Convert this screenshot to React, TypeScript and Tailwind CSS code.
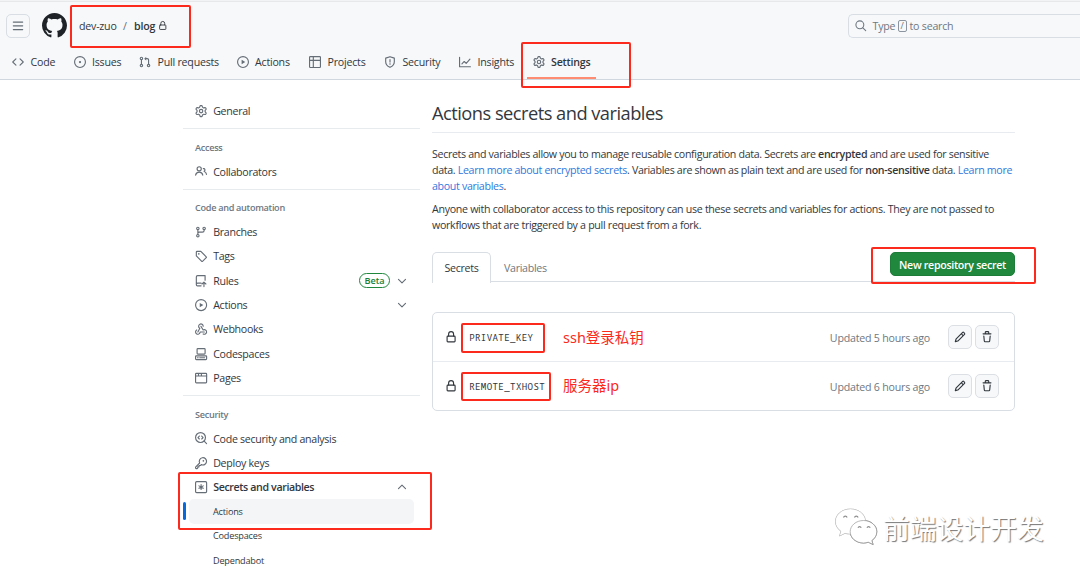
import type { ReactNode } from 'react';

const fills: Record<string, string> = {
  bars: 'M1 2.75A.75.75 0 0 1 1.75 2h12.5a.75.75 0 0 1 0 1.5H1.75A.75.75 0 0 1 1 2.75Zm0 5A.75.75 0 0 1 1.75 7h12.5a.75.75 0 0 1 0 1.5H1.75A.75.75 0 0 1 1 7.75ZM1.75 12h12.5a.75.75 0 0 1 0 1.5H1.75a.75.75 0 0 1 0-1.5Z',
  github:
    'M8 0c4.42 0 8 3.58 8 8a8.013 8.013 0 0 1-5.45 7.59c-.4.08-.55-.17-.55-.38 0-.27.01-1.13.01-2.2 0-.75-.25-1.23-.54-1.48 1.78-.2 3.65-.88 3.65-3.95 0-.88-.31-1.59-.82-2.15.08-.2.36-1.02-.08-2.12 0 0-.67-.22-2.2.82-.64-.18-1.32-.27-2-.27-.68 0-1.36.09-2 .27-1.53-1.03-2.2-.82-2.2-.82-.44 1.1-.16 1.92-.08 2.12-.51.56-.82 1.28-.82 2.15 0 3.06 1.86 3.75 3.64 3.95-.23.2-.44.55-.51 1.07-.46.21-1.61.55-2.33-.66-.15-.24-.6-.83-1.23-.82-.67.01-.27.38.01.53.34.19.73.9.82 1.13.16.45.68 1.31 2.69.94 0 .67.01 1.3.01 1.49 0 .21-.15.45-.55.38A7.995 7.995 0 0 1 0 8c0-4.42 3.58-8 8-8Z',
  code: 'm11.28 3.22 4.25 4.25a.75.75 0 0 1 0 1.06l-4.25 4.25a.749.749 0 0 1-1.275-.326.749.749 0 0 1 .215-.734L13.94 8l-3.72-3.72a.749.749 0 0 1 .326-1.275.749.749 0 0 1 .734.215Zm-6.56 0a.751.751 0 0 1 1.042.018.751.751 0 0 1 .018 1.042L2.06 8l3.72 3.72a.749.749 0 0 1-.326 1.275.749.749 0 0 1-.734-.215L.47 8.53a.75.75 0 0 1 0-1.06Z',
  gear: 'M8 0a8.2 8.2 0 0 1 .701.031C9.444.095 9.99.645 10.16 1.29l.288 1.107c.018.066.079.158.212.224.231.114.454.243.668.386.123.082.233.09.299.071l1.103-.303c.644-.176 1.392.021 1.82.63.27.385.506.792.704 1.218.315.675.111 1.422-.364 1.891l-.814.806c-.049.048-.098.147-.088.294.016.257.016.515 0 .772-.01.147.038.246.088.294l.814.806c.475.469.679 1.216.364 1.891a7.977 7.977 0 0 1-.704 1.217c-.428.61-1.176.807-1.82.63l-1.102-.302c-.067-.019-.177-.011-.3.071a5.909 5.909 0 0 1-.668.386c-.133.066-.194.158-.211.224l-.29 1.106c-.168.646-.715 1.196-1.458 1.26a8.006 8.006 0 0 1-1.402 0c-.743-.064-1.289-.614-1.458-1.26l-.289-1.106c-.018-.066-.079-.158-.212-.224a5.738 5.738 0 0 1-.668-.386c-.123-.082-.233-.09-.299-.071l-1.103.303c-.644.176-1.392-.021-1.82-.63a8.12 8.12 0 0 1-.704-1.218c-.315-.675-.111-1.422.363-1.891l.815-.806c.05-.048.098-.147.088-.294a6.214 6.214 0 0 1 0-.772c.01-.147-.038-.246-.088-.294l-.815-.806C.635 6.045.431 5.298.746 4.623a7.92 7.92 0 0 1 .704-1.217c.428-.61 1.176-.807 1.82-.63l1.102.302c.067.019.177.011.3-.071.214-.143.437-.272.668-.386.133-.066.194-.158.211-.224l.29-1.106C6.009.645 6.556.095 7.299.03 7.53.01 7.764 0 8 0Zm-.571 1.525c-.036.003-.108.036-.137.146l-.289 1.105c-.147.561-.549.967-.998 1.189-.173.086-.34.183-.5.29-.417.278-.97.423-1.529.27l-1.103-.303c-.109-.03-.175.016-.195.045-.22.312-.412.644-.573.99-.014.031-.021.11.059.19l.815.806c.411.406.562.957.53 1.456a4.709 4.709 0 0 0 0 .582c.032.499-.119 1.05-.53 1.456l-.815.806c-.081.08-.073.159-.059.19.162.346.353.677.573.989.02.03.085.076.195.046l1.102-.303c.56-.153 1.113-.008 1.53.27.161.107.328.204.501.29.447.222.85.629.997 1.189l.289 1.105c.029.109.101.143.137.146a6.6 6.6 0 0 0 1.142 0c.036-.003.108-.036.137-.146l.289-1.105c.147-.561.549-.967.998-1.189.173-.086.34-.183.5-.29.417-.278.97-.423 1.529-.27l1.103.303c.109.029.175-.016.195-.045.22-.313.411-.644.573-.99.014-.031.021-.11-.059-.19l-.815-.806c-.411-.406-.562-.957-.53-1.456a4.709 4.709 0 0 0 0-.582c-.032-.499.119-1.05.53-1.456l.815-.806c.081-.08.073-.159.059-.19a6.464 6.464 0 0 0-.573-.989c-.02-.03-.085-.076-.195-.046l-1.102.303c-.56.153-1.113.008-1.53-.27a4.44 4.44 0 0 0-.501-.29c-.447-.222-.85-.629-.997-1.189l-.289-1.105c-.029-.11-.101-.143-.137-.146a6.6 6.6 0 0 0-1.142 0ZM11 8a3 3 0 1 1-6 0 3 3 0 0 1 6 0ZM9.5 8a1.5 1.5 0 1 0-3.001.001A1.5 1.5 0 0 0 9.5 8Z',
  webhook:
    'M5.5 4.25a2.25 2.25 0 0 1 4.5 0 .75.75 0 0 0 1.5 0 3.75 3.75 0 1 0-6.14 2.889l-2.272 4.258a.75.75 0 0 0 1.324.706L7 7.25a.75.75 0 0 0-.309-1.015A2.25 2.25 0 0 1 5.5 4.25Z M7.364 3.607a.75.75 0 0 1 1.03.257l2.608 4.349a3.75 3.75 0 1 1-.628 6.785.75.75 0 0 1 .752-1.299 2.25 2.25 0 1 0-.033-3.88.75.75 0 0 1-1.03-.256L7.107 4.636a.75.75 0 0 1 .257-1.03Z M2.9 8.776A.75.75 0 0 1 2.625 9.8 2.25 2.25 0 1 0 6 11.75a.75.75 0 0 1 .75-.751h5.5a.75.75 0 0 1 0 1.5H7.425a3.751 3.751 0 1 1-5.55-3.998.75.75 0 0 1 1.024.274Z',
  pencil:
    'M11.013 1.427a1.75 1.75 0 0 1 2.474 0l1.086 1.086a1.75 1.75 0 0 1 0 2.474l-8.61 8.61c-.21.21-.47.364-.756.445l-3.251.93a.75.75 0 0 1-.927-.928l.929-3.25c.081-.286.235-.547.445-.758l8.61-8.61Zm.176 4.823L9.75 4.81l-6.286 6.287a.253.253 0 0 0-.064.108l-.558 1.953 1.953-.558a.253.253 0 0 0 .108-.064Zm1.238-3.763a.25.25 0 0 0-.354 0L10.811 3.75l1.439 1.44 1.263-1.263a.25.25 0 0 0 0-.354Z',
  trash:
    'M11 1.75V3h2.25a.75.75 0 0 1 0 1.5H2.75a.75.75 0 0 1 0-1.5H5V1.75C5 .784 5.784 0 6.75 0h2.5C10.216 0 11 .784 11 1.75ZM4.496 6.675l.66 6.6a.25.25 0 0 0 .249.225h5.19a.25.25 0 0 0 .249-.225l.66-6.6a.75.75 0 0 1 1.492.149l-.66 6.6A1.748 1.748 0 0 1 10.595 15h-5.19a1.75 1.75 0 0 1-1.741-1.575l-.66-6.6a.75.75 0 1 1 1.492-.15ZM6.5 1.75V3h3V1.75a.25.25 0 0 0-.25-.25h-2.5a.25.25 0 0 0-.25.25Z',
};

const dot = { fill: 'currentColor', stroke: 'none' };

const strokes: Record<string, ReactNode> = {
  issue: (
    <>
      <circle cx="8" cy="8" r="7.25" />
      <circle cx="8" cy="8" r="1.5" {...dot} />
    </>
  ),
  pull: (
    <>
      <circle cx="3.25" cy="3.25" r="1.6" />
      <circle cx="3.25" cy="12.75" r="1.6" />
      <circle cx="12.75" cy="12.75" r="1.6" />
      <path d="M3.25 5v6M12.75 11V5.25a1.75 1.75 0 0 0-1.75-1.75H8.5" />
      <path d="M9.6.9v5.2L7 3.5Z" {...dot} />
    </>
  ),
  play: (
    <>
      <circle cx="8" cy="8" r="7.25" />
      <path d="M6.2 5.1v5.8L11 8Z" {...dot} />
    </>
  ),
  table: (
    <>
      <rect x=".75" y=".75" width="14.5" height="14.5" rx="1" />
      <path d="M5.75.75v14.5M.75 5.75h14.5" />
    </>
  ),
  shield: (
    <>
      <path d="M8 .9 2.25 2.8v4.7c0 3.3 2.1 5.9 5.75 7.6 3.65-1.7 5.75-4.3 5.75-7.6V2.8Z" />
      <path d="M8 4.9v3.2" />
      <circle cx="8" cy="10.6" r="1" {...dot} />
    </>
  ),
  graph: <path d="M.75 1.75v12.5h14.5M3.9 10.6 7 7.3l2.6 2.5 5-5.6" />,
  people: (
    <>
      <circle cx="5.5" cy="5" r="2.75" />
      <path d="M.8 13.4a4.75 4.75 0 0 1 9.4 0M10.9 4.75a1.7 1.7 0 0 1 .9 3.4M12.1 8.5c1.7.5 2.7 1.9 3 3.9" />
    </>
  ),
  branch: (
    <>
      <circle cx="3.75" cy="3.25" r="1.6" />
      <circle cx="3.75" cy="12.75" r="1.6" />
      <circle cx="12" cy="3.25" r="1.6" />
      <path d="M3.75 5v6M12 5v.75C12 7 11 8 9.75 8H5.5C4.5 8 3.75 8.7 3.75 9.7" />
    </>
  ),
  tag: (
    <>
      <path d="M1.75 2.75v5l7.1 7.1c.3.3.7.3 1 0l4.9-4.9c.3-.3.3-.7 0-1l-7.1-7.2h-4.9c-.55 0-1 .45-1 1Z" />
      <circle cx="5" cy="5" r="1.1" {...dot} />
    </>
  ),
  rules: (
    <path d="M8 14.25H3.25c-1 0-1.5-.7-1.5-1.5V2.5c0-1 .7-1.75 1.75-1.75h9.75v6M1.75 12.5c0-1.2.6-1.75 1.75-1.75H8M11.75 15.2V9.6M9.2 11.8l2.55-2.5 2.55 2.5" />
  ),
  codespaces: (
    <>
      <rect x="2.75" y=".75" width="10.5" height="7.2" rx="1" />
      <rect x=".75" y="10.25" width="14.5" height="5" rx="1" />
      <path d="M3.2 12.75h1M6.2 12.75h6.5" />
    </>
  ),
  browser: (
    <>
      <rect x=".75" y="1.75" width="14.5" height="12.5" rx="1" />
      <path d="M.75 5.25h14.5M4.6 2v3M8.4 2v3" />
    </>
  ),
  codescan: (
    <>
      <circle cx="7.25" cy="7.25" r="6.5" />
      <path d="m12 12 3.2 3.2M5.7 5.3 3.9 7.25l1.8 1.95M8.8 5.3l1.8 1.95-1.8 1.95" />
    </>
  ),
  key: (
    <>
      <path d="M6.1 7.9a4.8 4.8 0 1 1 2.1 2.1l-1.1 1.2H5.3v1.7H3.6v1.6l-.8.75H1.5c-.5 0-.75-.3-.75-.75v-1.2Z" />
      <circle cx="11" cy="5" r="1.1" {...dot} />
    </>
  ),
  asterisk: (
    <>
      <rect x=".75" y=".75" width="14.5" height="14.5" rx="1.4" />
      <path d="M8 4.8v6.4M5.2 6.4l5.6 3.2M10.8 6.4l-5.6 3.2" />
    </>
  ),
  lock: (
    <>
      <rect x="2.75" y="6.75" width="10.5" height="7.5" rx="1" />
      <path d="M4.75 6.5V4a3.25 3.25 0 0 1 6.5 0v2.5" />
    </>
  ),
  search: (
    <>
      <circle cx="6.75" cy="6.75" r="5.5" />
      <path d="m10.9 10.9 4 4" />
    </>
  ),
  down: <path d="m3.3 5.8 4.7 4.6 4.7-4.6" />,
  up: <path d="m3.3 10.2 4.7-4.6 4.7 4.6" />,
};

function Icon({ name, className = 'size-3' }: { name: string; className?: string }) {
  return (
    <svg viewBox="0 0 16 16" className={`shrink-0 overflow-visible ${className}`} aria-hidden="true">
      {fills[name] ? (
        <path d={fills[name]} fill="currentColor" />
      ) : (
        <g fill="none" stroke="currentColor" strokeWidth="1.5" strokeLinecap="round" strokeLinejoin="round">
          {strokes[name]}
        </g>
      )}
    </svg>
  );
}

const tabs = [
  { icon: 'code', label: 'Code', width: 'w-[61.5px]' },
  { icon: 'issue', label: 'Issues', width: 'w-[65.5px]' },
  { icon: 'pull', label: 'Pull requests', width: 'w-[97.5px]' },
  { icon: 'play', label: 'Actions', width: 'w-[72.5px]' },
  { icon: 'table', label: 'Projects', width: 'w-[75px]' },
  { icon: 'shield', label: 'Security', width: 'w-[75px]' },
  { icon: 'graph', label: 'Insights', width: 'w-[74px]' },
];

function Header() {
  return (
    <header className="flex h-20 flex-col border-b border-[#d0d7de] bg-[#f6f8fa] tracking-[-0.22px]">
      <div className="h-[2px] shrink-0 border-b border-[#e6e8ea] bg-[#f1f3f4]" />
      <div className="flex h-12 items-center pl-1.5">
        <button className="flex size-6 items-center justify-center rounded-[5px] border border-[#d8dee4] text-[#656d76]">
          <Icon name="bars" />
        </button>
        <Icon name="github" className="ml-3 size-[25px] text-[#1f2328]" />
        <div className="ml-3 flex items-center">
          <span className="w-11 pt-[2px]">dev-zuo</span>
          <span className="w-[11px] pt-[2px] text-[#656d76]">/</span>
          <span className="w-[25px] pt-[2px] font-semibold">blog</span>
          <Icon name="lock" className="-ml-px size-[9.5px]" />
        </div>
        <div className="ml-auto flex h-6 w-[232px] items-center rounded-l-[5px] border border-r-0 border-[#d8dee4] pl-1.5 text-[#6e7781]">
          <Icon name="search" className="size-[11.5px]" />
          <span className="ml-1.5 w-[23px] pt-[2px]">Type</span>
          <span className="mr-[3px] ml-[2px] flex h-3 w-[9px] items-center justify-center rounded-[2px] border border-[#8c959f] text-[9px]">/</span>
          <span className="pt-[2px]">to search</span>
        </div>
      </div>
      <nav className="flex flex-1 pl-3">
        {tabs.map((t) => (
          <a key={t.label} className={`flex h-[25px] items-center gap-[6.5px] whitespace-nowrap ${t.width}`}>
            <Icon name={t.icon} className="size-3 text-[#656d76]" />
            <span className="pt-[1.5px]">{t.label}</span>
          </a>
        ))}
        <a className="-ml-[6px] flex h-[29.5px] w-[69px] flex-col border-b-2 border-[#fd8c73] pl-1.5 font-semibold">
          <span className="flex h-[25px] items-center gap-1.5">
            <Icon name="gear" className="size-3 text-[#656d76]" />
            <span className="pt-[1.5px]">Settings</span>
          </span>
        </a>
      </nav>
    </header>
  );
}

function NavRow({ icon, label, bold, children }: { icon: string; label: string; bold?: boolean; children?: ReactNode }) {
  return (
    <a className="flex h-[24.3px] items-center pr-3 pl-3">
      <Icon name={icon} className="size-[12.2px] text-[#656d76]" />
      <span className={bold ? 'ml-1.5 pt-[2px] font-semibold tracking-[-0.38px]' : 'ml-1.5 pt-[2px]'}>{label}</span>
      <span className="ml-auto flex items-center gap-1.5 text-[#656d76]">{children}</span>
    </a>
  );
}

function Section({ title, children }: { title: string; children: ReactNode }) {
  return (
    <section className="border-t border-[#e8ebee] pt-1.5 pb-[5px]">
      <h3 className="flex h-[24.3px] items-center pt-px pl-3 text-[9.15px] font-semibold text-[#6e7781]">{title}</h3>
      {children}
    </section>
  );
}

function Sidebar() {
  return (
    <aside className="w-[237px] shrink-0 pt-[18.8px]">
      <div className="pb-[5px]">
        <NavRow icon="gear" label="General" />
      </div>
      <Section title="Access">
        <NavRow icon="people" label="Collaborators" />
      </Section>
      <Section title="Code and automation">
        <NavRow icon="branch" label="Branches" />
        <NavRow icon="tag" label="Tags" />
        <NavRow icon="rules" label="Rules">
          <span className="flex h-[15px] w-[31px] items-center justify-center rounded-full border border-[#1f883d] pt-px text-[9.15px] font-semibold tracking-normal text-[#1a7f37]">
            Beta
          </span>
          <Icon name="down" />
        </NavRow>
        <NavRow icon="play" label="Actions">
          <Icon name="down" />
        </NavRow>
        <NavRow icon="webhook" label="Webhooks" />
        <NavRow icon="codespaces" label="Codespaces" />
        <NavRow icon="browser" label="Pages" />
      </Section>
      <Section title="Security">
        <NavRow icon="codescan" label="Code security and analysis" />
        <NavRow icon="key" label="Deploy keys" />
        <NavRow icon="asterisk" label="Secrets and variables" bold>
          <Icon name="up" />
        </NavRow>
        <div className="text-[9.15px] tracking-[-0.2px]">
          <div className="flex h-[24.3px] items-center">
            <span className="h-[18px] w-[3px] rounded-full bg-[#0969da]" />
            <span className="ml-[3px] flex h-full w-[225px] items-center rounded-[5px] bg-[#f4f5f7] pl-6">Actions</span>
          </div>
          <div className="flex h-[24.3px] items-center pt-px pl-[30px]">Codespaces</div>
          <div className="flex h-[24.3px] items-center pt-px pl-[30px]">Dependabot</div>
        </div>
      </Section>
    </aside>
  );
}

function SecretRow({ name, updated, last }: { name: string; updated: string; last?: boolean }) {
  return (
    <div className={last ? 'flex h-12 items-center pr-[15px] pl-3' : 'flex h-[49px] items-center border-b border-[#e8ebef] pr-[15px] pl-3'}>
      <Icon name="lock" className="size-[12.2px]" />
      <code className="ml-3 pt-px font-['Noto_Sans_Mono','DejaVu_Sans_Mono',monospace] text-[9.1px] tracking-[0.38px]">{name}</code>
      <span className="ml-auto pt-[3px] tracking-[-0.22px] text-[#6e7781]">{updated}</span>
      <span className="ml-[18px] flex gap-[3px]">
        <button className="flex size-6 items-center justify-center rounded-[5px] border border-[#dcdfe3] bg-[#f6f8fa]">
          <Icon name="pencil" />
        </button>
        <button className="flex size-6 items-center justify-center rounded-[5px] border border-[#dcdfe3] bg-[#f6f8fa]">
          <Icon name="trash" />
        </button>
      </span>
    </div>
  );
}

function Content() {
  return (
    <main className="ml-3 w-[583px] shrink-0 pt-[18px]">
      <h1 className="h-[35px] border-b border-[#e8ebef] text-[18.3px] leading-[29px] tracking-[-0.53px] whitespace-nowrap">
        Actions secrets and variables
      </h1>
      <p className="mt-[13px] leading-4 tracking-[-0.33px] whitespace-nowrap">
        Secrets and variables allow you to manage reusable configuration data. Secrets are{' '}
        <strong className="font-semibold">encrypted</strong> and are used for sensitive
        <br />
        data. <a className="text-[#2f78dd]">Learn more about encrypted secrets</a>. Variables are shown as plain text and are used for{' '}
        <strong className="font-semibold">non-sensitive</strong> data. <a className="text-[#2f78dd]">Learn more</a>
        <br />
        <a className="text-[#2f78dd]">about variables</a>.
      </p>
      <p className="mt-[7px] leading-4 whitespace-nowrap">
        Anyone with collaborator access to this repository can use these secrets and variables for actions. They are not passed to
        <br />
        workflows that are triggered by a pull request from a fork.
      </p>
      <div className="mt-[19px] flex h-[30px] border-b border-[#d8dee4]">
        <span className="flex h-[31px] w-[59px] items-center justify-center rounded-t-[5px] border border-b-0 border-[#d8dee4] bg-white pt-px">
          Secrets
        </span>
        <span className="flex h-[31px] items-center pt-[2px] pl-[13px] text-[#6e7781]">Variables</span>
        <button className="ml-auto flex h-6 w-[125px] items-center justify-center rounded-[5px] border border-[#1c7c38] bg-[#1f883d] pt-[3px] font-semibold whitespace-nowrap text-white">
          New repository secret
        </button>
      </div>
      <div className="mt-[30px] rounded-[5px] border border-[#d8dee4]">
        <SecretRow name="PRIVATE_KEY" updated="Updated 5 hours ago" />
        <SecretRow name="REMOTE_TXHOST" updated="Updated 6 hours ago" last />
      </div>
    </main>
  );
}

const marks = [
  'left-[70px] top-[5px] h-[43px] w-[121px]',
  'left-[521px] top-[42px] h-[46px] w-[110px]',
  'left-[871px] top-[247px] h-[37px] w-[165px]',
  'left-[461px] top-[323px] h-[30px] w-[84px]',
  'left-[461px] top-[372px] h-[29px] w-[90px]',
  'left-[178px] top-[472px] h-[58px] w-[254px]',
];

function Annotations() {
  return (
    <div className="tracking-normal">
      {marks.map((m) => (
        <div key={m} className={`absolute rounded-[2px] border-2 border-[#fb2a1c] ${m}`} />
      ))}
      <span className="absolute top-[327px] left-[563px] font-['Noto_Sans','Noto_Sans_CJK_SC',sans-serif] text-[14.5px] leading-5 whitespace-nowrap text-[#fb2a1c]">
        ssh登录私钥
      </span>
      <span className="absolute top-[375px] left-[563px] font-['Noto_Sans','Noto_Sans_CJK_SC',sans-serif] text-[14.5px] leading-5 whitespace-nowrap text-[#fb2a1c]">
        服务器ip
      </span>
      <div className="absolute top-[508px] left-[834px] flex items-center">
        <svg viewBox="0 0 46 40" className="h-10 w-[46px] overflow-visible drop-shadow-[0.7px_0.8px_0.5px_#606060]">
          <path
            d="M16.5 1C8 1 1.5 6.5 1.5 13.5c0 4 2.2 7.5 5.5 9.8L5.5 28l5.5-2.7c1.7.5 3.6.8 5.5.8 8.3 0 15-5.6 15-12.6S24.8 1 16.5 1Z"
            fill="#fff"
            stroke="#dcdcdc"
            strokeWidth=".4"
          />
          <path
            d="M29.5 12.5c-7.4 0-13.3 5-13.3 11.2S22.1 35 29.5 35c1.7 0 3.3-.3 4.8-.8l4.8 2.3-1.3-4c3-2 5-5.2 5-8.8 0-6.2-5.9-11.2-13.3-11.2Z"
            fill="#fff"
            stroke="#9a9a9a"
            strokeWidth=".7"
          />
          <path
            d="M9.5 9.5a1.9 1.9 0 0 1 3.6 0M20.5 9.5a1.9 1.9 0 0 1 3.6 0M24 19.8a1.7 1.7 0 0 1 3.2 0M33 19.8a1.7 1.7 0 0 1 3.2 0"
            fill="none"
            stroke="#8c8c8c"
            strokeWidth="1.2"
          />
        </svg>
        <span className="ml-[3px] font-['Noto_Sans_CJK_SC',sans-serif] text-[26.8px] leading-10 whitespace-nowrap text-white [text-shadow:1px_1px_1px_#777]">
          前端设计开发
        </span>
      </div>
    </div>
  );
}

export default function App() {
  return (
    <div className="relative h-[577px] w-[1080px] overflow-hidden bg-white font-['Open_Sans','Noto_Sans',sans-serif] text-[10.65px] tracking-[-0.3px] text-[#32373d]">
      <Header />
      <div className="flex pl-[183px]">
        <Sidebar />
        <Content />
      </div>
      <Annotations />
    </div>
  );
}
